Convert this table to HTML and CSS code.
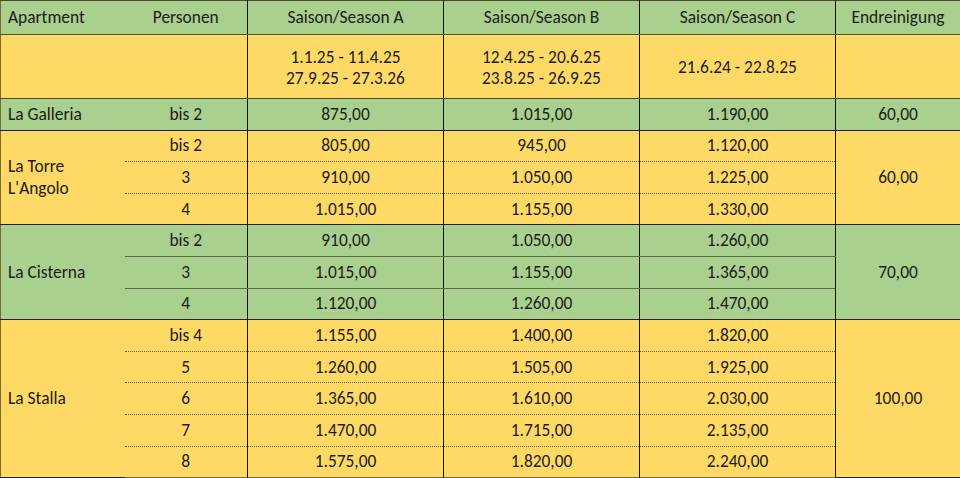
FILE: index.html
```html
<!DOCTYPE html>
<html lang="de">
<head>
<meta charset="utf-8">
<title>Preise</title>
<link rel="stylesheet" href="styles.css">
</head>
<body>
<table class="prices">
  <colgroup>
    <col class="c-apt"><col class="c-pers"><col class="c-season"><col class="c-season"><col class="c-season"><col class="c-end">
  </colgroup>
  <tr class="head green">
    <th class="apt">Apartment</th>
    <th class="pers">Personen</th>
    <th class="v">Saison/Season A</th>
    <th class="v">Saison/Season B</th>
    <th class="v">Saison/Season C</th>
    <th class="v">Endreinigung</th>
  </tr>
  <tr class="dates yellow">
    <td colspan="2"></td>
    <td class="v">1.1.25 - 11.4.25<br>27.9.25 - 27.3.26</td>
    <td class="v">12.4.25 - 20.6.25<br>23.8.25 - 26.9.25</td>
    <td class="v">21.6.24 - 22.8.25</td>
    <td class="v"></td>
  </tr>
  <tr class="row green grp">
    <td class="apt">La Galleria</td>
    <td>bis 2</td>
    <td class="v">875,00</td>
    <td class="v">1.015,00</td>
    <td class="v">1.190,00</td>
    <td class="v">60,00</td>
  </tr>
  <tr class="row yellow grp sub">
    <td class="apt" rowspan="3"><span class="two">La Torre<br>L'Angolo</span></td>
    <td>bis 2</td>
    <td class="v">805,00</td>
    <td class="v">945,00</td>
    <td class="v">1.120,00</td>
    <td class="v" rowspan="3">60,00</td>
  </tr>
  <tr class="row yellow sub">
    <td>3</td>
    <td class="v">910,00</td>
    <td class="v">1.050,00</td>
    <td class="v">1.225,00</td>
  </tr>
  <tr class="row yellow">
    <td>4</td>
    <td class="v">1.015,00</td>
    <td class="v">1.155,00</td>
    <td class="v">1.330,00</td>
  </tr>
  <tr class="row green grp sub">
    <td class="apt" rowspan="3">La Cisterna</td>
    <td>bis 2</td>
    <td class="v">910,00</td>
    <td class="v">1.050,00</td>
    <td class="v">1.260,00</td>
    <td class="v" rowspan="3">70,00</td>
  </tr>
  <tr class="row green sub">
    <td>3</td>
    <td class="v">1.015,00</td>
    <td class="v">1.155,00</td>
    <td class="v">1.365,00</td>
  </tr>
  <tr class="row green">
    <td>4</td>
    <td class="v">1.120,00</td>
    <td class="v">1.260,00</td>
    <td class="v">1.470,00</td>
  </tr>
  <tr class="row yellow grp sub">
    <td class="apt" rowspan="5">La Stalla</td>
    <td>bis 4</td>
    <td class="v">1.155,00</td>
    <td class="v">1.400,00</td>
    <td class="v">1.820,00</td>
    <td class="v" rowspan="5">100,00</td>
  </tr>
  <tr class="row yellow sub">
    <td>5</td>
    <td class="v">1.260,00</td>
    <td class="v">1.505,00</td>
    <td class="v">1.925,00</td>
  </tr>
  <tr class="row yellow sub">
    <td>6</td>
    <td class="v">1.365,00</td>
    <td class="v">1.610,00</td>
    <td class="v">2.030,00</td>
  </tr>
  <tr class="row yellow sub">
    <td>7</td>
    <td class="v">1.470,00</td>
    <td class="v">1.715,00</td>
    <td class="v">2.135,00</td>
  </tr>
  <tr class="row yellow last">
    <td>8</td>
    <td class="v">1.575,00</td>
    <td class="v">1.820,00</td>
    <td class="v">2.240,00</td>
  </tr>
</table>
</body>
</html>
```

FILE: styles.css
```css
html, body {
  margin: 0;
  padding: 0;
  background: #ffffff;
}

.prices {
  width: 960px;
  height: 478px;
  table-layout: fixed;
  border-collapse: collapse;
  font-family: "Carlito", "Lato", "Noto Sans", sans-serif;
  font-size: 17.4px;
  color: #1c1c1c;
  border-top: 1px solid #4a4a2a;
  border-left: 1px solid #7a6a32;
  border-bottom: 1px solid #7a6a32;
  border-right: 1px solid #8faf74;
}

.c-apt { width: 124px; }
.c-pers { width: 123px; }
.c-season { width: 196px; }
.c-end { width: 125px; }

.prices th,
.prices td {
  padding: 0;
  font-weight: normal;
  text-align: center;
  vertical-align: middle;
  line-height: 21px;
}

.prices .apt {
  text-align: left;
  padding-left: 7px;
}

.prices .two {
  display: block;
  line-height: 22px;
}

.prices .v {
  border-left: 1px solid #111111;
}

.green { background: #a9d08e; }
.yellow { background: #ffd966; }

.head { height: 34px; }
.head th { border-bottom: 1px solid #4b5524; }

.dates { height: 64px; }
.dates td {
  border-bottom: 1px solid #4b4a24;
  line-height: 21px;
  padding-top: 2px;
}

.row { height: 31.6px; }

.grp td { border-top: 1px solid #222211; }

.green.sub td { border-bottom: 1px solid #5a6c42; }
.yellow.sub td { border-bottom: 1px dotted #6e5e2a; }

.prices .sub td.apt,
.prices .sub td[rowspan] {
  border-bottom-color: #222211;
  border-bottom-style: solid;
}
```
